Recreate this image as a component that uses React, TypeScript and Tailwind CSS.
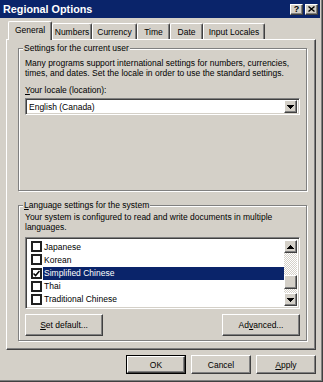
import React from "react";

const raised =
  "bg-[#d4d0c8] border border-t-white border-l-white border-r-[#404040] border-b-[#404040] shadow-[inset_-1px_-1px_0_#808080]";
const sunken =
  "border border-t-[#808080] border-l-[#808080] border-r-white border-b-white shadow-[inset_1px_1px_0_#404040,inset_-1px_-1px_0_#d4d0c8]";

const tabs = [
  { label: "General", w: "w-[44px]", active: true },
  { label: "Numbers", w: "w-[40px]" },
  { label: "Currency", w: "w-[45px]" },
  { label: "Time", w: "w-[33px]" },
  { label: "Date", w: "w-[33px]" },
  { label: "Input Locales", w: "w-[62px]" },
];

const languages = [
  { name: "Japanese", checked: false },
  { name: "Korean", checked: false },
  { name: "Simplified Chinese", checked: true, selected: true },
  { name: "Thai", checked: false },
  { name: "Traditional Chinese", checked: false },
];

const Arrow = ({ up = false }: { up?: boolean }) => (
  <svg width="7" height="4" viewBox="0 0 7 4" shapeRendering="crispEdges">
    {up ? (
      <>
        <rect x="3" y="0" width="1" height="1" />
        <rect x="2" y="1" width="3" height="1" />
        <rect x="1" y="2" width="5" height="1" />
        <rect x="0" y="3" width="7" height="1" />
      </>
    ) : (
      <>
        <rect x="0" y="0" width="7" height="1" />
        <rect x="1" y="1" width="5" height="1" />
        <rect x="2" y="2" width="3" height="1" />
        <rect x="3" y="3" width="1" height="1" />
      </>
    )}
  </svg>
);

const Button = ({
  children,
  className = "",
  isDefault = false,
}: {
  children: React.ReactNode;
  className?: string;
  isDefault?: boolean;
}) => (
  <div className={`${isDefault ? "border border-black" : ""} ${className}`}>
    <div className={`${raised} h-full flex items-center justify-center`}>{children}</div>
  </div>
);

const GroupBox = ({
  label,
  className = "",
  children,
}: {
  label: React.ReactNode;
  className?: string;
  children: React.ReactNode;
}) => (
  <div
    className={`relative ml-[11px] w-[289px] border border-[#808080] shadow-[inset_1px_1px_0_#fff,1px_1px_0_#fff] ${className}`}
  >
    <span className="absolute -top-[6px] left-[4px] px-[1px] bg-[#d4d0c8] leading-[10px]">{label}</span>
    {children}
  </div>
);

export default function App() {
  return (
    <div className="w-[323px] h-[382px] bg-[#d4d0c8] text-black text-[8.5px] leading-[10px] font-['Liberation_Sans',Arial,sans-serif] overflow-hidden">
      <div className="h-full border-r border-b border-r-[#404040] border-b-[#404040]">
        <div className="h-full border-r border-b border-r-[#808080] border-b-[#808080] flex flex-col">
          {/* title bar */}
          <div className="h-[18px] mr-[1px] bg-[#0a246a] flex items-center pl-[3px] pr-[2px]">
            <span className="text-white font-bold text-[10.8px] flex-1">Regional Options</span>
            <div className={`${raised} w-[13px] h-[11px] flex items-center justify-center`}>
              <span className="font-bold text-[9px] leading-none">?</span>
            </div>
            <div className={`${raised} w-[13px] h-[11px] ml-[2px] flex items-center justify-center`}>
              <svg width="7" height="6" viewBox="0 0 7 6">
                <path d="M0.5 0.5L6.5 5.5M6.5 0.5L0.5 5.5" stroke="#000" strokeWidth="1.4" />
              </svg>
            </div>
          </div>

          {/* tabs */}
          <div className="mt-[3px] ml-[8px] h-[18px] flex items-end">
            {tabs.map((t) =>
              t.active ? (
                <div
                  key={t.label}
                  className={`${t.w} h-[19px] -mb-[1px] relative z-10 bg-[#d4d0c8] border-t border-l border-white border-r border-r-[#404040] rounded-t-[2px] shadow-[inset_-1px_0_0_#808080] flex items-start justify-center pt-[3px]`}
                >
                  {t.label}
                </div>
              ) : (
                <div
                  key={t.label}
                  className={`${t.w} h-[16px] border-t border-l border-white border-r border-r-[#404040] rounded-t-[2px] shadow-[inset_-1px_0_0_#808080] flex items-start justify-center pt-[3px]`}
                >
                  {t.label}
                </div>
              )
            )}
          </div>

          {/* tab panel */}
          <div className="ml-[6px] w-[310px] h-[311px] border border-t-white border-l-white border-r-[#404040] border-b-[#404040] shadow-[inset_-1px_-1px_0_#808080]">
            <GroupBox label="Settings for the current user" className="mt-[8px] h-[143px]">
              <div className="px-[6px] pt-[10px]">
                <p className="leading-[9.5px]">
                  Many programs support international settings for numbers, currencies,
                  times, and dates. Set the locale in order to use the standard settings.
                </p>
                <div className="mt-[7px]">
                  <u>Y</u>our locale (location):
                </div>
                <div className={`${sunken} mt-[3px] h-[17px] bg-white flex items-center`}>
                  <span className="flex-1 pl-[3px]">English (Canada)</span>
                  <div className={`${raised} w-[13px] h-[13px] mr-[2px] flex items-center justify-center`}>
                    <Arrow />
                  </div>
                </div>
              </div>
            </GroupBox>

            <GroupBox
              label={
                <>
                  <u>L</u>anguage settings for the system
                </>
              }
              className="mt-[14px] h-[136px]"
            >
              <div className="px-[6px] pt-[6px]">
                <p>
                  Your system is configured to read and write documents in multiple
                  languages.
                </p>
                <div className={`${sunken} mt-[5px] h-[72px] bg-white flex p-[2px]`}>
                  <div className="flex-1 flex flex-col">
                    {languages.map((l) => (
                      <div key={l.name} className="h-[13.6px] flex items-center pl-[3px]">
                        <div className="w-[11px] h-[11px] border-2 border-[#202020] bg-white flex items-center justify-center">
                          {l.checked && (
                            <svg width="7" height="7" viewBox="0 0 7 7">
                              <path d="M0.5 3.5L2.6 5.6L6.5 1" stroke="#000" strokeWidth="1.5" fill="none" />
                            </svg>
                          )}
                        </div>
                        <span
                          className={`ml-[1px] pl-[1px] h-[13px] flex items-center flex-1 ${
                            l.selected ? "bg-[#0a246a] text-white" : ""
                          }`}
                        >
                          {l.name}
                        </span>
                      </div>
                    ))}
                  </div>
                  <div className="w-[13px] flex flex-col bg-[repeating-conic-gradient(#d4d0c8_0_25%,#ffffff_0_50%)] bg-[length:2px_2px]">
                    <div className={`${raised} h-[13px] flex items-center justify-center`}>
                      <Arrow up />
                    </div>
                    <div className="h-[22px]" />
                    <div className={`${raised} h-[14px]`} />
                    <div className="flex-1" />
                    <div className={`${raised} h-[13px] flex items-center justify-center`}>
                      <Arrow />
                    </div>
                  </div>
                </div>
                <div className="mt-[5px] flex justify-between">
                  <Button className="w-[78px] h-[22px]">
                    <span>
                      <u>S</u>et default...
                    </span>
                  </Button>
                  <Button className="w-[78px] h-[22px]">
                    <span>
                      Ad<u>v</u>anced...
                    </span>
                  </Button>
                </div>
              </div>
            </GroupBox>
          </div>

          {/* dialog buttons */}
          <div className="mt-[5px] ml-[126px] flex gap-[5px]">
            <Button isDefault className="w-[60px] h-[19px]">
              OK
            </Button>
            <Button className="w-[60px] h-[19px]">Cancel</Button>
            <Button className="w-[60px] h-[19px]">
              <span>
                <u>A</u>pply
              </span>
            </Button>
          </div>
        </div>
      </div>
    </div>
  );
}
